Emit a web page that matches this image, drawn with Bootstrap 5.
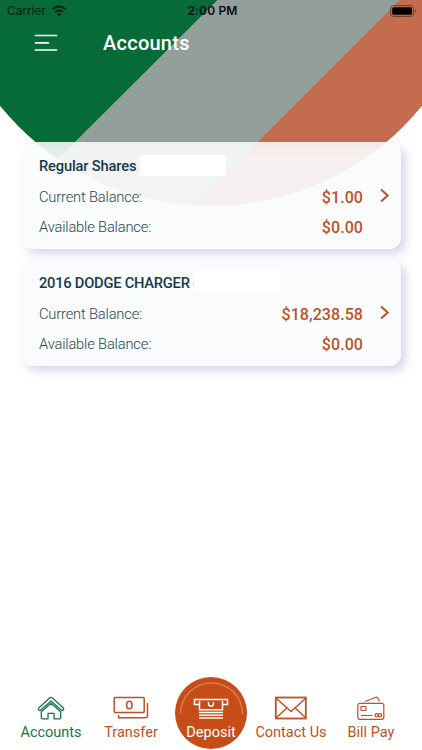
<!DOCTYPE html>
<html lang="en">
<head>
<meta charset="utf-8">
<meta name="viewport" content="width=device-width, initial-scale=1">
<title>Accounts</title>
<link href="https://cdn.jsdelivr.net/npm/bootstrap@5.3.0/dist/css/bootstrap.min.css" rel="stylesheet">
<style>
body{font-family:Roboto,sans-serif;height:750px;overflow:hidden;background:#fff;color:#153a4b}
.app{height:750px;isolation:isolate}
.backdrop{z-index:-1}
.status{height:21px;font-family:Inter,sans-serif;font-size:12px;line-height:21px;color:#071c12;padding:0 5px 0 7px}
.status>*{flex:1 1 0}
.carrier{letter-spacing:-.1px}
.wifi{margin-left:5px}
.clock{letter-spacing:.15px;color:#0b0f0e;padding-left:1px}
.topbar{height:44px;padding-left:34px}
.title{font-size:20px;font-weight:500;line-height:44px;letter-spacing:.25px;margin-left:45px}
.accounts{padding:77px 21px 0;gap:10px}
.account{height:107px;border:0;border-radius:12px;background:linear-gradient(rgba(249,250,252,.88),rgba(250,251,253,.92) 16px);box-shadow:5px 5px 9px rgba(160,160,210,.42);padding:14px 10px 0 18px;color:#153a4b}
.name{font-size:14.700px;font-weight:500;line-height:20px;height:20px;letter-spacing:-.16px}
.name-long{letter-spacing:-.24px}
.mask{width:86px;height:21px;background:#fff;margin-top:-1px}
.mask-over{margin:-4px 0 0 -4px;position:relative}
.line{font-size:14.700px;font-weight:300;line-height:20px;height:20px;color:#274651;letter-spacing:-.17px}
.line+.line{margin-top:10px}
.lines{padding-top:11px}
.amount{font-size:16px;font-weight:500;color:#b95428;letter-spacing:.07px;line-height:21px}
.chev{width:28px;line-height:1;padding-top:1px}
.chev svg{display:block;margin-left:auto}
.tabs{height:74px;color:#bf5026}
.tab{font-size:14.500px;line-height:18px;color:#bf5026;width:80px;padding-top:20px;white-space:nowrap}
.tab svg{height:24px;margin-bottom:4px}
.tab.on{color:#1c7448}
.deposit{width:72px;height:72px;background:#c64d18;color:#fff;font-size:14.500px;line-height:18px;padding-top:19px;margin:1px 4px 0}
.deposit .dep-label{margin-top:2px}
.ring{left:0;top:0}
</style>
<script src="https://cdn.jsdelivr.net/npm/bootstrap@5.3.0/dist/js/bootstrap.bundle.min.js"></script>
</head>
<body>
<div class="app d-flex flex-column position-relative">
  <svg class="backdrop position-absolute top-0 start-0" width="422" height="210" viewBox="0 0 422 210">
    <clipPath id="disc"><circle cx="211" cy="-66.5" r="272.5"/></clipPath>
    <g clip-path="url(#disc)">
      <path fill="#066b39" d="M0 0H218L0 217Z"/>
      <path fill="#949e9b" d="M217.500 0H400L190 210H7.500Z"/>
      <path fill="#c56b4e" d="M399.500 0H422V210H189.500Z"/>
    </g>
  </svg>
  <div class="status d-flex">
    <div class="d-flex align-items-center"><span class="carrier">Carrier</span>
      <svg class="wifi" width="16" height="12" viewBox="0 0 16 12" fill="none" stroke="currentColor" stroke-width="2"><path d="M1.500 4.200Q8-1.200 14.500 4.200M4 7.100Q8 3.800 12 7.100"/><path d="M5.900 9Q8 7.300 10.100 9L8 11.300Z" fill="currentColor" stroke="none"/></svg>
    </div>
    <div class="clock text-center fw-semibold">2:00 PM</div>
    <div class="d-flex align-items-center justify-content-end">
      <svg width="27" height="12" viewBox="0 0 27 12"><rect x=".6" y=".6" width="23" height="10.800" rx="3" fill="none" stroke="#633e30"/><rect x="2.200" y="2.200" width="19.800" height="7.600" rx="1.500"/><path d="M25 4.200Q27 6 25 7.800Z" fill="#633e30"/></svg>
    </div>
  </div>
  <header class="topbar d-flex align-items-center text-white">
    <svg width="24" height="18" viewBox="0 0 24 18" fill="none" stroke="currentColor" stroke-width="1.700" stroke-linecap="round"><path d="M1.500 1.500H22.500M1.500 8.800H14.500M1.500 16H22.500"/></svg>
    <h1 class="title mb-0">Accounts</h1>
  </header>
  <main class="accounts d-flex flex-column flex-grow-1">
    <section class="card account">
      <div class="name d-flex align-items-center">Regular Shares<span class="mask ms-1"></span></div>
      <div class="lines d-flex">
        <div class="flex-grow-1">
          <div class="line d-flex justify-content-between">Current Balance:<span class="amount">$1.00</span></div>
          <div class="line d-flex justify-content-between">Available Balance:<span class="amount">$0.00</span></div>
        </div>
        <div class="chev"><svg width="12" height="15" viewBox="0 0 12 15" fill="none" stroke="#b95428" stroke-width="2"><path d="M2 1.500L8.700 7.500L2 13.500"/></svg></div>
      </div>
    </section>
    <section class="card account">
      <div class="name name-long d-flex align-items-center">2016 DODGE CHARGER (<span class="mask mask-over"></span></div>
      <div class="lines d-flex">
        <div class="flex-grow-1">
          <div class="line d-flex justify-content-between">Current Balance:<span class="amount">$18,238.58</span></div>
          <div class="line d-flex justify-content-between">Available Balance:<span class="amount">$0.00</span></div>
        </div>
        <div class="chev"><svg width="12" height="15" viewBox="0 0 12 15" fill="none" stroke="#b95428" stroke-width="2"><path d="M2 1.500L8.700 7.500L2 13.500"/></svg></div>
      </div>
    </section>
  </main>
  <nav class="tabs d-flex justify-content-center">
    <a class="tab on d-flex flex-column align-items-center text-decoration-none" href="#">
      <svg width="30" viewBox="0 0 30 24" fill="none" stroke="currentColor" stroke-width="1.300" stroke-linejoin="round"><path d="M15 1.300Q15.800 1.300 16.500 2L27.300 12Q28.200 13 27.300 14Q26.300 15 25.200 14L15 4.900L4.800 14Q3.700 15 2.700 14Q1.800 13 2.700 12L13.500 2Q14.200 1.300 15 1.300Z"/><path d="M15 7.200L5.300 15.700V21.800Q5.300 22.800 6.300 22.800H12V17.300H18V22.800H23.700Q24.700 22.800 24.700 21.800V15.700Z"/></svg>
      Accounts
    </a>
    <a class="tab d-flex flex-column align-items-center text-decoration-none" href="#">
      <svg width="36" viewBox="0 0 36 24" fill="none" stroke="currentColor" stroke-width="1.500"><rect x="1.200" y="1.500" width="30" height="15" rx="1"/><ellipse cx="16.300" cy="9" rx="2.700" ry="3.700" stroke-width="1.600"/><path d="M34.500 7V20Q34.500 21.700 32.800 21.700H5.500V19"/></svg>
      Transfer
    </a>
    <a class="deposit rounded-circle position-relative d-flex flex-column align-items-center text-decoration-none" href="#">
      <svg class="ring position-absolute" width="72" height="72" viewBox="0 0 72 72" fill="none" stroke="#de7a50" stroke-width="1.500"><path d="M5.500 37A31 31 0 1 1 67.500 37"/></svg>
      <svg width="36" height="26" viewBox="0 0 36 26" fill="none" stroke="currentColor" stroke-width="1.500"><path d="M6 8.500H1.500V3.500H34.500V8.500H30M6.500 5V13.800H29.500V5M15.500 6V7.500Q15.500 10.200 18 10.200T20.500 7.500V6M6 16.500H30M6 19.200H30M6 21.900H30"/></svg>
      <span class="dep-label position-relative">Deposit</span>
    </a>
    <a class="tab d-flex flex-column align-items-center text-decoration-none" href="#">
      <svg width="34" viewBox="0 0 34 24" fill="none" stroke="currentColor" stroke-width="1.800"><rect x="1.800" y="1.500" width="30" height="21"/><path d="M2 2L17 15.500L32 2M2 22L12.800 12M32 22L21.200 12" stroke-width="1.400"/></svg>
      Contact Us
    </a>
    <a class="tab d-flex flex-column align-items-center text-decoration-none" href="#">
      <svg width="30" viewBox="0 0 30 24" fill="none" stroke="currentColor" stroke-width="1.200"><rect x="1.800" y="7.300" width="26" height="16" rx="2"/><rect x="5" y="10.500" width="5" height="4" rx=".5"/><path d="M5 19.500H16.500M9 5.500L20 1.200Q21.200.9 21.800 2L23.500 5.500"/><circle cx="20.700" cy="19.300" r="1.700"/><circle cx="23.900" cy="19.300" r="1.700"/></svg>
      Bill Pay
    </a>
  </nav>
</div>
</body>
</html>
